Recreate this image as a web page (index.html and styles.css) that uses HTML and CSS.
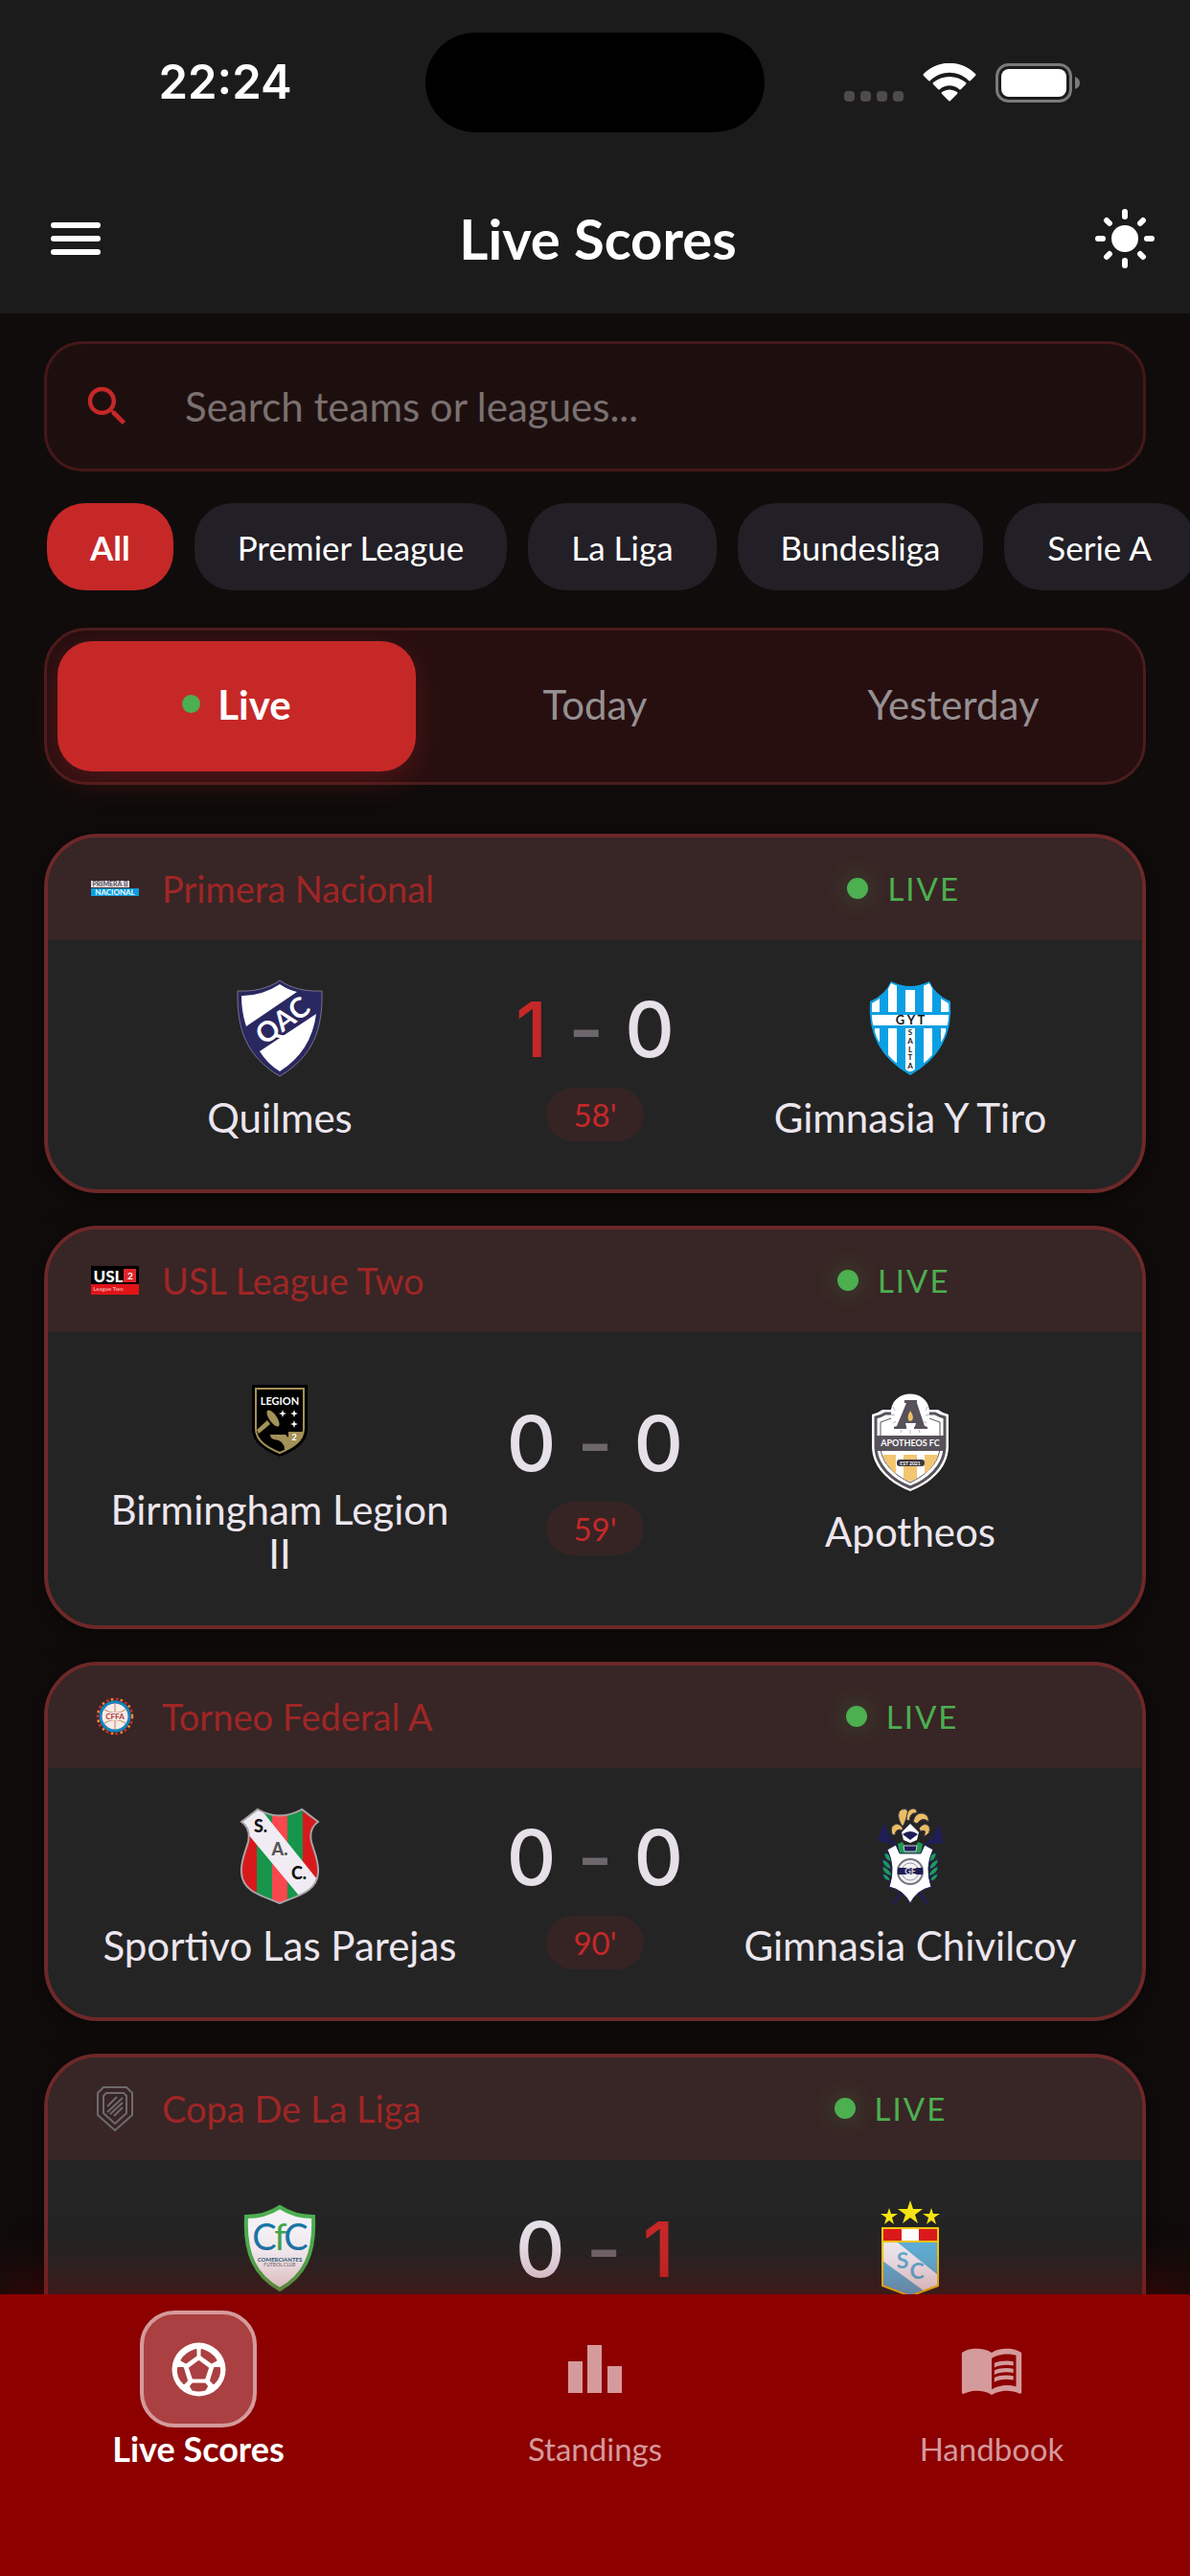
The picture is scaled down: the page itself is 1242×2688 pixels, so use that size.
FILE: index.html
```html
<!DOCTYPE html>
<html lang="en">
  <head>
    <meta charset="UTF-8" />
    <meta name="viewport" content="width=device-width, initial-scale=1.0" />
    <title>Live Scores</title>
    <link rel="stylesheet" href="styles.css">
  </head>
  <body>
    <header class="top">
      <div class="status-bar">
        <time class="clock">22:24</time>
        <div class="island"></div>
        <div class="status-icons">
          <svg width="62" height="41" viewBox="0 0 62 41" fill="#4f4b4a">
            <rect x="0" y="29" width="11" height="11" rx="4" />
            <rect x="17" y="29" width="11" height="11" rx="4" />
            <rect x="34" y="29" width="11" height="11" rx="4" />
            <rect x="51" y="29" width="11" height="11" rx="4" />
          </svg>
          <svg width="56" height="41" viewBox="0 0 56 41" fill="#fff">
            <path d="M1 13Q0 12 1 11C16-4 40-4 55 11Q56 12 55 13L50 18Q49 19 48 18C37 7 19 7 8 18Q7 19 6 18Z" />
            <path d="M11 22Q10 21 11 20C21 12 35 12 45 20Q46 21 45 22L40 27Q39 28 38 27C32 22 24 22 18 27Q17 28 16 27Z" />
            <path d="M20 32Q19 31 20 30Q28 25 36 30Q37 31 36 32L29 39Q28 40 27 39Z" />
          </svg>
          <svg width="88" height="41" viewBox="0 0 88 41">
            <rect x="1.500" y="1.500" width="77" height="38" rx="12" fill="none" stroke="#7c797d" stroke-width="3" />
            <rect x="6" y="6" width="68" height="29" rx="8" fill="#fff" />
            <path d="M83 14Q88 16 88 20.500Q88 25 83 27Z" fill="#7c797d" />
          </svg>
        </div>
      </div>
      <div class="app-bar">
        <button class="icon-button" aria-label="Menu">
          <svg width="54" height="36" viewBox="0 0 54 36" fill="#fff">
            <rect x="1" y="1" width="52" height="6" rx="3" />
            <rect x="1" y="15" width="52" height="6" rx="3" />
            <rect x="1" y="29" width="52" height="6" rx="3" />
          </svg>
        </button>
        <h1>Live Scores</h1>
        <button class="icon-button" aria-label="Light mode">
          <svg width="64" height="64" viewBox="0 0 64 64" stroke="#fff" stroke-width="6" stroke-linecap="round">
            <circle cx="32" cy="32" r="14" fill="#fff" stroke="none" />
            <path d="M32 4v5M32 55v5M4 32h5M55 32h5M13 13l3 3M48 48l3 3M13 51l3-3M48 16l3-3" />
          </svg>
        </button>
      </div>
    </header>

    <main>
      <label class="search">
        <svg width="54" height="54" viewBox="0 0 24 24" fill="#c62828">
          <path d="M15.500 14h-.79l-.28-.27A6.471 6.471 0 0 0 16 9.500 6.500 6.500 0 1 0 9.500 16c1.610 0 3.090-.59 4.230-1.570l.27.28v.79l5 4.990L20.490 19l-4.990-5zm-6 0C7.010 14 5 11.990 5 9.500S7.010 5 9.500 5 14 7.010 14 9.500 11.990 14 9.500 14z" />
        </svg>
        <input type="text" aria-label="Search" placeholder="Search teams or leagues..." />
      </label>

      <div class="chips">
        <button class="chip active">All</button>
        <button class="chip">Premier League</button>
        <button class="chip">La Liga</button>
        <button class="chip">Bundesliga</button>
        <button class="chip">Serie A</button>
      </div>

      <div class="tabs">
        <button class="tab active"><span class="dot"></span>Live</button>
        <button class="tab">Today</button>
        <button class="tab">Yesterday</button>
      </div>

      <section class="matches">
        <article class="match">
          <div class="match-head">
            <svg class="league-logo" viewBox="0 0 50 50">
              <rect x="0" y="17" width="40" height="7" fill="#e4dfe6" />
              <text x="20" y="23" font-size="7" fill="#55505a">PRIMERA B</text>
              <rect x="0" y="25" width="50" height="8" fill="#0d9ddb" />
              <text x="25" y="32" font-size="8" fill="#e9f7ff">NACIONAL</text>
            </svg>
            <span class="league">Primera Nacional</span>
            <span class="live">LIVE</span>
          </div>
          <div class="match-body">
            <div class="team">
              <svg class="crest" viewBox="0 0 102 102">
                <path d="M51 1C40 9 24 13 7 12C6 52 16 80 51 101C86 80 96 52 95 12C78 13 62 9 51 1Z" fill="#2a2860" stroke="#77748c" />
                <path d="M11 17Q33 17 51 5Q60 11 69 13L16 49Q11 34 11 17Z" fill="#fff" />
                <path d="M89 36Q84 75 51 96Q38 88 30 75Z" fill="#fff" />
                <text x="54" y="53" font-size="29" fill="#fff" transform="rotate(-36 54 43)">QAC</text>
              </svg>
              <span class="team-name">Quilmes</span>
            </div>
            <div class="result">
              <div class="score"><b class="lead">1</b><i>-</i><b>0</b></div>
              <span class="minute">58'</span>
            </div>
            <div class="team">
              <svg class="crest" viewBox="0 0 102 102">
                <defs>
                  <clipPath id="gyt"><path d="M31 4Q51 14 71 4Q77 18 91 25Q95 72 51 97Q7 72 11 25Q25 18 31 4Z" /></clipPath>
                </defs>
                <path d="M31 2Q51 12 71 2Q77 16 93 23Q97 74 51 100Q5 74 9 23Q25 16 31 2Z" fill="#0d9fe3" />
                <g clip-path="url(#gyt)" fill="#fff">
                  <path d="M11 0h8v34h-8zM28 0h9v34h-9zM46 11h10v23h-10zM65 0h9v34h-9zM83 0h9v34h-9z" />
                  <path d="M10 37h82v11H10z" />
                  <path d="M14 51h5v14h-5zM28 51h9v45h-9zM46 51h10v45h-10zM65 51h9v45h-9zM83 51h5v14h-5z" />
                </g>
                <g fill="#17171c">
                  <text x="51" y="47" font-size="13">G Y T</text>
                  <text x="51" y="58" font-size="8">S</text>
                  <text x="51" y="67" font-size="8">A</text>
                  <text x="51" y="76" font-size="8">L</text>
                  <text x="51" y="84" font-size="8">T</text>
                  <text x="51" y="93" font-size="8">A</text>
                </g>
              </svg>
              <span class="team-name">Gimnasia Y Tiro</span>
            </div>
          </div>
        </article>

        <article class="match">
          <div class="match-head">
            <svg class="league-logo" viewBox="0 0 50 50">
              <rect x="0" y="10" width="50" height="30" fill="#000" />
              <rect x="0" y="29" width="50" height="11" fill="#e01417" />
              <rect x="34" y="13" width="13" height="14" fill="#e0262a" />
              <text x="18" y="27" font-size="17" class="heavy" fill="#fff">USL</text>
              <text x="41" y="24" font-size="10" fill="#fff">2</text>
              <text x="18" y="36" font-size="6" fill="#f0a0a0">League Two</text>
            </svg>
            <span class="league">USL League Two</span>
            <span class="live">LIVE</span>
          </div>
          <div class="match-body">
            <div class="team">
              <svg class="crest" viewBox="0 0 102 102">
                <path d="M22 14H80V60C80 75 66 83 51 89C36 83 22 75 22 60Z" fill="#000" />
                <path d="M26 18H76V60C76 73 63 80 51 85C39 80 26 73 26 60Z" fill="none" stroke="#a39157" stroke-width="2" />
                <text x="51" y="35" font-size="11" fill="#fff">LEGION</text>
                <path d="M27 61L38 51L41 55L29 65Z" fill="#a39157" />
                <ellipse cx="44" cy="49" rx="10" ry="4" fill="#a39157" transform="rotate(55 44 49)" />
                <path d="M41 66H57L60 69V63H75Q74 76 56 82Q56 72 45 71Q41 70 41 66Z" fill="#a39157" />
                <path d="M54 40l1 3 3 1-3 1-1 3-1-3-3-1 3-1zM66 40l1 3 3 1-3 1-1 3-1-3-3-1 3-1zM66 51l1 3 3 1-3 1-1 3-1-3-3-1 3-1z" fill="#fff" />
                <text x="66" y="72" font-size="9" fill="#fff">2</text>
              </svg>
              <span class="team-name">Birmingham Legion II</span>
            </div>
            <div class="result">
              <div class="score"><b>0</b><i>-</i><b>0</b></div>
              <span class="minute">59'</span>
            </div>
            <div class="team">
              <svg class="crest" viewBox="0 0 102 102">
                <path d="M31 17C34-5 68-5 71 17H80Q84 20 91 22V55C91 78 72 94 51 102C30 94 11 78 11 55V22Q18 20 22 17Z" fill="#fff" />
                <path d="M31 21H25Q20 24 15 25V55C15 76 33 91 51 98C69 91 87 76 87 55V25Q82 24 77 21H71" fill="none" stroke="#57525a" stroke-width="3" />
                <path d="M31 26Q26 28 20 30V55C20 73 36 86 51 93C66 86 82 73 82 55V30Q76 28 71 26" fill="none" stroke="#57525a" />
                <path d="M45 7H58V10L66 34L69 35V37H55V34H47V37H34V35L37 34L47 10H45Z" fill="#57525a" />
                <path d="M51 18Q57 27 51 29Q46 27 51 18Z" fill="#efc26b" />
                <path d="M46 31H57Q56 37 51 37Q47 37 46 31Z" fill="#fff" />
                <path d="M33 14l2 4M31 22l4 1M33 31l3-2M69 14l-2 4M71 22l-4 1M68 31l-3-2M42 38l-1 3M51 38v4M60 38l1 3" stroke="#b9b4bb" />
                <rect x="15" y="44" width="72" height="16" fill="#57525a" />
                <text x="51" y="55" font-size="9" fill="#fff">APOTHEOS FC</text>
                <path d="M22 64H36V84Q25 74 22 64ZM44 64H58V89L51 92L44 89ZM66 64H80Q77 75 66 84Z" fill="#f3c670" />
                <rect x="37" y="69" width="29" height="7" rx="3" fill="#3c383f" />
                <text x="51" y="75" font-size="5" fill="#fff">EST 2021</text>
              </svg>
              <span class="team-name">Apotheos</span>
            </div>
          </div>
        </article>

        <article class="match">
          <div class="match-head">
            <svg class="league-logo" viewBox="0 0 50 50">
              <circle cx="25" cy="25" r="18" fill="none" stroke="#b3302f" stroke-width="3" stroke-dasharray="3 2" />
              <circle cx="25" cy="25" r="18" fill="none" stroke="#e9a12b" stroke-width="2" stroke-dasharray="2 8" />
              <circle cx="25" cy="25" r="15" fill="#f4ece8" stroke="#1683bb" stroke-width="3" />
              <path d="M25 11v28M14 18Q25 25 36 18M14 32Q25 25 36 32" fill="none" stroke="#c97a5c" />
              <rect x="14" y="21" width="22" height="8" fill="#f4ece8" />
              <text x="25" y="28" font-size="8" fill="#b8332f">CFFA</text>
            </svg>
            <span class="league">Torneo Federal A</span>
            <span class="live">LIVE</span>
          </div>
          <div class="match-body">
            <div class="team">
              <svg class="crest" viewBox="0 0 102 102">
                <defs>
                  <clipPath id="sac"><path d="M28 2Q51 15 74 2L91 15Q81 22 84 36C87 47 92 56 91 68C90 88 70 92 51 100C32 92 12 88 11 68C10 56 15 47 18 36Q21 22 11 15Z" /></clipPath>
                </defs>
                <g clip-path="url(#sac)">
                  <rect width="102" height="102" fill="#d8191c" />
                  <rect x="27" width="48" height="102" fill="#17954b" />
                  <rect x="43" width="16" height="102" fill="#f8484d" />
                  <path d="M28-2L94 80L76 98L8 16Z" fill="#f1ecf3" />
                </g>
                <path d="M28 2Q51 15 74 2L91 15Q81 22 84 36C87 47 92 56 91 68C90 88 70 92 51 100C32 92 12 88 11 68C10 56 15 47 18 36Q21 22 11 15Z" fill="none" stroke="#a9a3a8" stroke-width="2" />
                <g font-size="18" fill="#111">
                  <text x="31" y="26" class="heavy">S.</text>
                  <text x="51" y="50" class="heavy" fill="#555">A.</text>
                  <text x="71" y="75" class="heavy">C.</text>
                </g>
              </svg>
              <span class="team-name">Sportivo Las Parejas</span>
            </div>
            <div class="result">
              <div class="score"><b>0</b><i>-</i><b>0</b></div>
              <span class="minute">90'</span>
            </div>
            <div class="team">
              <svg class="crest" viewBox="0 0 102 102">
                <path d="M18 35L24 20L28 31L35 39M84 37L81 22L76 31L67 39M42 88L33 101M60 88L69 101" fill="#1f1d55" stroke="#1f1d55" stroke-width="3" />
                <g fill="#e9bd62" stroke="#3a3450" stroke-width="1">
                  <path d="M42 19Q35 6 42 2Q50 0 48 8Q46 14 44 19Z" />
                  <path d="M47 13Q47 2 54 1Q60 3 57 6Q51 5 50 14Z" />
                  <path d="M54 15Q56 5 64 6Q71 8 70 15Q64 9 58 17Z" />
                  <path d="M32 28Q29 19 37 17Q44 19 43 24Q36 21 35 29Z" />
                  <path d="M60 22Q66 14 71 20Q73 28 65 30Q69 22 62 25Z" />
                </g>
                <path d="M42 26L51 17L60 26L58 34L51 37L44 34Z" fill="#fff" />
                <path d="M43 28Q51 22 59 28L51 34Z" fill="#1f1d55" />
                <path d="M38 38L43 36L47 44H55L59 36L64 38L62 48H40Z" fill="#1d9b55" />
                <path d="M44 40H58L57 46H45Z" fill="#1f1d55" stroke="#cfcbd3" />
                <g fill="#1d9b55" stroke="#1f1d55" stroke-width="1">
                  <path d="M24 47Q32 49 31 57Q23 54 24 47ZM22 54Q31 57 31 65Q21 61 22 54ZM22 61Q31 65 32 72Q21 69 22 61ZM22 69Q30 71 30 77Q23 76 22 69Z" />
                  <path d="M78 47Q70 49 71 57Q79 54 78 47ZM80 54Q71 57 71 65Q81 61 80 54ZM80 61Q71 65 70 72Q81 69 80 61ZM80 69Q72 71 72 77Q79 76 80 69Z" />
                </g>
                <path d="M36 39L40 48H62L66 39L75 44Q66 62 73 83Q58 86 51 100Q44 86 29 83Q36 62 27 44Z" fill="#fff" stroke="#1f1d55" />
                <circle cx="51" cy="67" r="13" fill="#f4f2f6" stroke="#77747f" stroke-width="2" />
                <circle cx="51" cy="67" r="9" fill="none" stroke="#99959f" />
                <rect x="38" y="63" width="26" height="7" fill="#1f1d55" />
                <text x="51" y="70" font-size="9" fill="#d8d4dc">GE</text>
              </svg>
              <span class="team-name">Gimnasia Chivilcoy</span>
            </div>
          </div>
        </article>

        <article class="match">
          <div class="match-head">
            <svg class="league-logo" viewBox="0 0 50 50" fill="none" stroke="#6e6a6c">
              <path d="M13 3H37L43 9V32L25 48L7 32V9Z" stroke-width="2" />
              <path d="M16 9H34L37 12V30L25 41L13 30V12Z" stroke-width="2" />
              <path d="M17 23L27 13M17 29L33 14M20 31L33 19M24 33L33 24" stroke-width="2" />
            </svg>
            <span class="league">Copa De La Liga</span>
            <span class="live">LIVE</span>
          </div>
          <div class="match-body">
            <div class="team">
              <svg class="crest" viewBox="0 0 102 102">
                <path d="M51 8Q36 18 16 18C14 58 26 80 51 94C76 80 88 58 86 18Q66 18 51 8Z" fill="#f4f1f6" stroke="#4caf50" stroke-width="4" />
                <g font-size="38">
                  <text x="35" y="53" class="thin" fill="#1a76a8">C</text>
                  <text x="52" y="53" class="thin" fill="#3fa648">f</text>
                  <text x="68" y="53" class="thin" fill="#1a76a8">C</text>
                </g>
                <text x="51" y="65" font-size="6" fill="#255f7d">COMERCIANTES</text>
                <text x="51" y="70" font-size="5" fill="#8d8a90">FUTBOL CLUB</text>
              </svg>
              <span class="team-name">Comerciantes FC</span>
            </div>
            <div class="result">
              <div class="score"><b>0</b><i>-</i><b class="lead">1</b></div>
              <span class="minute">61'</span>
            </div>
            <div class="team">
              <svg class="crest" viewBox="0 0 102 102">
                <path d="M51 1l3 9h10l-8 6 3 9-8-6-8 6 3-9-8-6h10zM29 9l2 6h7l-6 4 2 7-5-4-5 4 2-7-6-4h7zM73 9l2 6h7l-6 4 2 7-5-4-5 4 2-7-6-4h7z" fill="#f7e413" />
                <path d="M22 30H80V90L51 101L22 90Z" fill="#5db2da" />
                <path d="M22 45H38L80 79V91L66 96L22 64Z" fill="#efebf2" />
                <rect x="22" y="30" width="58" height="14" fill="#dc1a1c" />
                <rect x="42" y="30" width="18" height="14" fill="#fff" />
                <path d="M22 30H80V90L51 101L22 90ZM22 44H80" fill="none" stroke="#f0c911" stroke-width="2" />
                <text x="43" y="72" font-size="23" fill="#5db2da">S</text>
                <text x="58" y="83" font-size="23" fill="#5db2da">C</text>
              </svg>
              <span class="team-name">Sporting Cristal</span>
            </div>
          </div>
        </article>
      </section>
    </main>

    <nav class="bottom-nav">
      <a href="#" class="nav-item active">
        <span class="nav-icon">
          <svg width="57" height="57" viewBox="0 0 57 57">
            <circle cx="28.500" cy="28.500" r="28" fill="#fff" />
            <g fill="#aa4041" stroke="#aa4041" stroke-width="2" stroke-linejoin="round">
              <path d="M28.500 20L38 27L34.500 37.500H22.500L19 27Z" />
              <path d="M25.500 8V14L15 21.500L10.500 19Q15 11 25.500 8Z" />
              <path d="M31.500 8V14L42 21.500L46.500 19Q42 11 31.500 8Z" />
              <path d="M7 27L12 27L16 40L13 43Q6 37 7 27Z" />
              <path d="M50 27L45 27L41 40L44 43Q51 37 50 27Z" />
              <path d="M20 46L22 43.500H35L37 46L35 49.500Q28.500 51.500 22 49.500Z" />
            </g>
          </svg>
        </span>
        <span class="nav-label">Live Scores</span>
      </a>
      <a href="#" class="nav-item">
        <span class="nav-icon">
          <svg width="68" height="68" viewBox="0 0 68 68" fill="#d59a9b">
            <path d="M6 26H21V59H6zM26 9H41V59H26zM47 31H62V59H47z" />
          </svg>
        </span>
        <span class="nav-label">Standings</span>
      </a>
      <a href="#" class="nav-item">
        <span class="nav-icon">
          <svg width="68" height="68" viewBox="0 0 24 24" fill="#d59a9b">
            <path d="M21 5c-1.110-.35-2.330-.5-3.500-.5-1.950 0-4.050.4-5.500 1.500-1.450-1.100-3.550-1.500-5.500-1.500S2.450 4.900 1 6v14.650c0 .25.25.5.5.5.1 0 .15-.05.25-.05C3.100 20.450 5.050 20 6.500 20c1.950 0 4.050.4 5.500 1.500 1.350-.85 3.800-1.500 5.500-1.500 1.650 0 3.350.3 4.750 1.050.1.050.15.050.25.050.25 0 .5-.25.5-.5V6c-.6-.45-1.250-.75-2-1zm0 13.500c-1.100-.35-2.300-.5-3.500-.5-1.700 0-4.150.65-5.500 1.500V8c1.350-.85 3.800-1.500 5.500-1.500 1.200 0 2.400.15 3.500.5v11.500z" />
            <path d="M17.500 10.500c.88 0 1.730.09 2.500.26V9.240c-.79-.15-1.640-.24-2.500-.24-1.700 0-3.240.29-4.500.83v1.660c1.130-.64 2.700-.99 4.500-.99zM13 12.490v1.660c1.130-.64 2.700-.99 4.500-.99.88 0 1.730.09 2.500.26V11.900c-.79-.15-1.640-.24-2.500-.24-1.700 0-3.240.3-4.500.83zM17.500 14.330c-1.700 0-3.240.29-4.500.83v1.660c1.130-.64 2.700-.99 4.500-.99.88 0 1.730.09 2.500.26v-1.520c-.79-.16-1.640-.24-2.500-.24z" />
          </svg>
        </span>
        <span class="nav-label">Handbook</span>
      </a>
    </nav>
  </body>
</html>
```
FILE: styles.css
```css
* {
  box-sizing: border-box;
}

body {
  margin: 0;
  height: 100vh;
  display: flex;
  flex-direction: column;
  overflow: hidden;
  background-color: #100c0b;
  color: #ece6ee;
  font-family: Lato, "Liberation Sans", sans-serif;
}

button,
input {
  font-family: inherit;
  border: none;
  background: none;
  padding: 0;
}

svg {
  display: block;
  flex: none;
}

.top {
  background-color: #1b1b1b;
  color: #fff;
}

/* status bar */
.status-bar {
  display: grid;
  grid-template-columns: 1fr 354px 1fr;
  align-items: center;
  padding: 34px 0;
}

.clock {
  padding-left: 26px;
  text-align: center;
  font-family: Inter, sans-serif;
  font-size: 49px;
  font-weight: 600;
  line-height: 60px;
}

.island {
  height: 104px;
  border-radius: 52px;
  background-color: #000;
}

.status-icons {
  display: flex;
  justify-content: flex-end;
  gap: 20px;
  padding-right: 115px;
}

.app-bar {
  display: flex;
  align-items: center;
  justify-content: space-between;
  height: 155px;
  padding: 0 36px 2px 52px;
}

.app-bar h1 {
  margin: 0;
  font-size: 58px;
  font-weight: 700;
  line-height: 68px;
}

.icon-button {
  cursor: pointer;
}

main {
  flex: 1;
  min-height: 0;
  overflow-y: auto;
  scrollbar-width: none;
  padding: 29px 46px 34px;
}

/* search and filters */
.search {
  display: flex;
  align-items: center;
  gap: 54px;
  height: 136px;
  padding: 0 36px;
  border: 3px solid #451819;
  border-radius: 40px;
  background-color: #1e0f0f;
}

.search input {
  flex: 1;
  min-width: 0;
  color: #ece6ee;
  font-size: 42px;
  outline: none;
}

.search input::placeholder {
  color: #7a7170;
}

.chips {
  display: flex;
  gap: 22px;
  margin: 33px -46px 0 0;
  padding-left: 3px;
  overflow-x: auto;
  scrollbar-width: none;
}

.chip {
  flex: none;
  height: 91px;
  padding: 0 45px;
  border-radius: 40px;
  background-color: #221f26;
  color: #fff;
  font-size: 35px;
  cursor: pointer;
}

.chip.active {
  background-color: #c62828;
  font-weight: 700;
}

.tabs {
  display: grid;
  grid-template-columns: repeat(3, 1fr);
  height: 164px;
  margin-top: 39px;
  padding: 11px;
  border: 3px solid #4c1c1d;
  border-radius: 44px;
  background-color: #270f10;
}

.tab {
  display: flex;
  align-items: center;
  justify-content: center;
  gap: 18px;
  padding-bottom: 5px;
  border-radius: 36px;
  color: #969092;
  font-size: 42px;
  cursor: pointer;
}

.tab.active {
  background-color: #c62828;
  box-shadow: 0 10px 30px rgba(198, 40, 40, 0.25);
  color: #fff;
  font-weight: 700;
}

.dot {
  width: 19px;
  height: 19px;
  border-radius: 50%;
  background-color: #4caf50;
}

/* match cards */
.matches {
  display: flex;
  flex-direction: column;
  gap: 34px;
  margin-top: 51px;
}

.match {
  flex: none;
  overflow: hidden;
  border: 4px solid #6d2828;
  border-radius: 56px;
  background-color: #242424;
  box-shadow: 0 8px 30px rgba(0, 0, 0, 0.5);
}

.match-head {
  display: flex;
  align-items: center;
  height: 107px;
  padding: 0 45px 2px;
  background-color: #382525;
  font-size: 38px;
}

.league-logo {
  width: 50px;
  height: 50px;
  margin-right: 24px;
}

.league {
  margin-right: 41%;
  color: #9f2626;
}

.live {
  display: flex;
  align-items: center;
  gap: 20px;
  color: #4caf50;
  font-size: 33px;
  letter-spacing: 2px;
}

.live::before {
  content: "";
  width: 22px;
  height: 22px;
  border-radius: 50%;
  background-color: #4caf50;
  box-shadow: 0 0 24px 4px rgba(76, 175, 80, 0.2);
}

.match-body {
  display: grid;
  grid-template-columns: 380fr 278fr 380fr;
  align-items: center;
  padding: 0 52px;
}

.team {
  display: flex;
  flex-direction: column;
  align-items: center;
  gap: 19px;
  padding: 41px 0 52px;
}

.crest {
  width: 102px;
  height: 102px;
}

.crest text,
.league-logo text {
  text-anchor: middle;
  font-weight: 700;
}

.crest .heavy,
.league-logo .heavy {
  font-weight: 900;
}

.crest .thin {
  font-weight: 400;
}

.team-name {
  font-size: 42px;
  line-height: 46px;
  text-align: center;
}

.result {
  display: flex;
  flex-direction: column;
  align-items: center;
  gap: 19px;
}

.score {
  display: flex;
  align-items: center;
  gap: 22px;
  color: #e6e0e9;
  font-family: Inter, sans-serif;
  font-size: 80px;
  line-height: 84px;
}

.score b,
.score i {
  font-style: normal;
  font-weight: 500;
}

.score i {
  color: #6d676c;
}

.score .lead {
  color: #c62828;
}

.minute {
  padding: 0 28px;
  border-radius: 28px;
  background-color: #362424;
  color: #c62828;
  font-size: 33px;
  line-height: 56px;
}

/* bottom navigation */
.bottom-nav {
  position: relative;
  display: grid;
  grid-template-columns: repeat(3, 1fr);
  padding: 17px 0 112px;
  background-color: #8c0000;
  box-shadow: 0 -12px 54px rgba(140, 0, 0, 0.4);
}

.nav-item {
  display: flex;
  flex-direction: column;
  align-items: center;
  gap: 1px;
  color: #d59a9b;
  font-size: 33px;
  line-height: 42px;
  text-decoration: none;
}

.nav-icon {
  display: flex;
  align-items: center;
  justify-content: center;
  width: 122px;
  height: 122px;
}

.nav-item.active {
  color: #fff;
  font-size: 36px;
  font-weight: 700;
}

.nav-item.active .nav-icon {
  border: 4px solid #d59a9b;
  border-radius: 36px;
  background-color: #aa4041;
}
```
